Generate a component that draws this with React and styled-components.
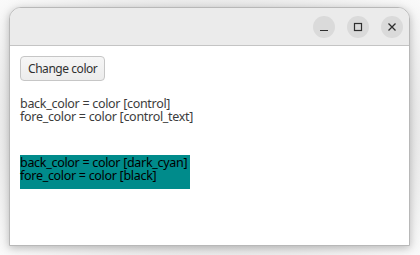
import React from "react";
import styled, { createGlobalStyle } from "styled-components";

const Global = createGlobalStyle`
  html, body {
    margin: 0;
    padding: 0;
    background: #f4f4f4;
  }
  body {
    width: 420px;
    height: 255px;
    overflow: hidden;
    font-family: "Noto Sans", "DejaVu Sans", sans-serif;
  }
`;

const Desk = styled.div`
  width: 420px;
  height: 255px;
  padding: 7px 10px 9px 9px;
  box-sizing: border-box;
  background: radial-gradient(ellipse at center, #e6e6e6 60%, #fafafa 100%);
`;

const Window = styled.div`
  width: 401px;
  height: 239px;
  display: flex;
  flex-direction: column;
  background: #ffffff;
  border: 1px solid #b8b8b8;
  border-radius: 12px 12px 0 0;
  box-shadow: 0 2px 8px rgba(0, 0, 0, 0.25);
  box-sizing: border-box;
  overflow: hidden;
`;

const TitleBar = styled.div`
  height: 37px;
  flex: none;
  display: flex;
  align-items: center;
  justify-content: flex-end;
  gap: 12px;
  padding-right: 6px;
  background: #ebebeb;
  border-bottom: 1px solid #c4c4c4;
`;

const WinButton = styled.div`
  width: 22px;
  height: 22px;
  border-radius: 50%;
  background: #dadada;
  display: flex;
  align-items: center;
  justify-content: center;
  color: #2e2e2e;
`;

const Content = styled.div`
  flex: 1;
  display: flex;
  flex-direction: column;
  align-items: flex-start;
  padding: 10px 10px;
`;

const Button = styled.button`
  font-family: inherit;
  font-size: 12px;
  letter-spacing: -0.45px;
  color: #303030;
  height: 25px;
  padding: 0 7px;
  background: linear-gradient(#f6f6f6, #ececec);
  border: 1px solid #c6c6c6;
  border-radius: 4px;
`;

const Line = styled.div`
  font-size: 12.5px;
  line-height: 14px;
  height: 13px;
  letter-spacing: -0.3px;
  white-space: nowrap;
`;

const Label = styled.div`
  margin-top: ${(p) => p.$top}px;
  color: ${(p) => p.$fore};
  background: ${(p) => p.$back || "transparent"};
  width: ${(p) => (p.$back ? "170px" : "auto")};
  height: ${(p) => (p.$back ? "34px" : "auto")};
  box-sizing: border-box;
  padding-top: ${(p) => (p.$back ? "1px" : "0")};
`;

export default function App() {
  return (
    <>
      <Global />
      <Desk>
        <Window>
          <TitleBar>
            <WinButton>
              <svg width="10" height="10" viewBox="0 0 10 10">
                <line x1="1" y1="8.5" x2="9" y2="8.5" stroke="currentColor" strokeWidth="1.2" />
              </svg>
            </WinButton>
            <WinButton>
              <svg width="10" height="10" viewBox="0 0 10 10">
                <rect x="1.5" y="1.5" width="7" height="7" fill="none" stroke="currentColor" strokeWidth="1.2" />
              </svg>
            </WinButton>
            <WinButton>
              <svg width="10" height="10" viewBox="0 0 10 10">
                <path d="M1.5 1.5 L8.5 8.5 M8.5 1.5 L1.5 8.5" stroke="currentColor" strokeWidth="1.3" />
              </svg>
            </WinButton>
          </TitleBar>
          <Content>
            <Button>Change color</Button>
            <Label $top={16} $fore="#3c3c3c">
              <Line>back_color = color [control]</Line>
              <Line>fore_color = color [control_text]</Line>
            </Label>
            <Label $top={32} $fore="#000000" $back="#008b8b">
              <Line>back_color = color [dark_cyan]</Line>
              <Line>fore_color = color [black]</Line>
            </Label>
          </Content>
        </Window>
      </Desk>
    </>
  );
}
